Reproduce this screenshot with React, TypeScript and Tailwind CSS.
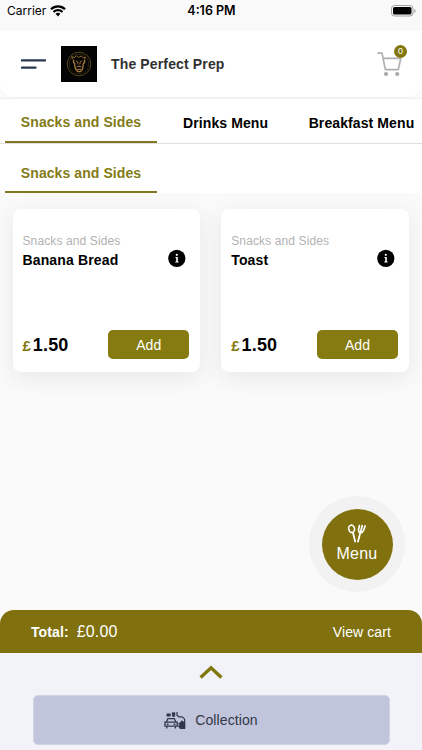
type Product = {
  name: string
  category: string
  price: string
}

const products: Product[] = [
  { name: 'Banana Bread', category: 'Snacks and Sides', price: '1.50' },
  { name: 'Toast', category: 'Snacks and Sides', price: '1.50' },
]

function StatusBar() {
  return (
    <div className="grid h-[31px] shrink-0 grid-cols-3 items-start bg-[#f9f9f9] pl-[7px] pr-[6px] pt-[3px] font-['Inter',sans-serif] text-[12px] leading-4 text-black">
      <div className="flex items-center gap-[4px]">
        <span>Carrier</span>
        <svg width="16" height="12" viewBox="0 0 16 12" fill="none" stroke="black" strokeWidth="2.3">
          <path d="M1 4.3C4.9 .5 11.1 .5 15 4.3" />
          <path d="M3.5 7C6 4.6 10 4.6 12.5 7" />
          <path d="M5.6 8.8C7 7.5 9 7.5 10.4 8.8L8 11.4Z" fill="black" stroke="none" />
        </svg>
      </div>
      <span className="text-center text-[12.5px] font-semibold">4:16 PM</span>
      <svg className="mt-[2px] justify-self-end" width="25" height="12" viewBox="0 0 25 12">
        <rect x=".5" y=".5" width="21.5" height="10.5" rx="3" fill="none" stroke="#a0a0a0" />
        <rect x="2" y="2" width="18.5" height="7.5" rx="1.6" />
        <path d="M23.4 4v4q1.2-.6 1.2-2t-1.2-2Z" fill="#999" />
      </svg>
    </div>
  )
}

function Logo() {
  return (
    <svg className="ml-[15px] shrink-0" width="36" height="36" viewBox="0 0 36 36" fill="none">
      <rect width="36" height="36" fill="#030303" />
      <circle cx="18" cy="18" r="11.8" stroke="#5a481c" strokeWidth="1" />
      <circle cx="18" cy="18" r="9.8" stroke="#3a2e14" strokeWidth=".7" />
      <path d="M11.5 13.2l-.8-2.6 2.6 1.2 2-2.2 2.2 1.8 2.8-1.4 1.6 1.7 2.6-.6-.8 2.2" stroke="#8a6a2c" />
      <path d="M12.6 13.6c-.6 2.2.4 3.6 1.6 4.2M23.4 13.6c.6 2-.2 3.6-1.5 4.2M13.8 17.8c-.4 3.8 1.4 6.6 3.2 7.8h2.4c2-1.6 3.2-4.2 2.6-7.8" stroke="#a97e3c" strokeWidth="1.3" />
      <path d="M14.8 14.8l1.8.8.4 2.8M21.2 14.8l-1.9.8-.4 2.8" stroke="#9c6c38" />
      <path d="M15.6 21.2c1.5-1.4 3.4-1.4 4.8 0M16.2 23c1.2.7 2.6.7 3.8 0" stroke="#b98a55" />
    </svg>
  )
}

function Header() {
  return (
    <header className="flex h-[67px] shrink-0 items-center rounded-b-[14px] border-b border-[#f2f2f2] bg-white pl-[20px] pr-[15px]">
      <svg width="26" height="12" viewBox="0 0 26 12" stroke="#29384f" strokeWidth="2.4" strokeLinecap="round">
        <path d="M2 2.4h23M2 9.6h13.5" />
      </svg>
      <Logo />
      <h1 className="ml-[14px] text-[14px] font-bold leading-5 tracking-[0.14px] text-[#303030]">The Perfect Prep</h1>
      <div className="relative ml-auto h-[34px] w-[31px]">
        <svg className="mt-[4px]" width="27" height="28" viewBox="0 0 27 28" fill="none">
          <path d="M2 2.2h4l3.4 16.4h12.9L24.8 7.3H7.3" stroke="#b0b0b0" strokeWidth="1.7" strokeLinecap="round" strokeLinejoin="round" />
          <circle cx="10" cy="23" r="2.1" fill="#aaa" />
          <circle cx="21.2" cy="23" r="2.1" fill="#aaa" />
        </svg>
        <span className="absolute right-0 top-[-2px] flex size-[13px] items-center justify-center rounded-full bg-[#837710] text-[9px] leading-none text-white">0</span>
      </div>
    </header>
  )
}

function MenuTabs() {
  return (
    <nav className="shrink-0 overflow-hidden whitespace-nowrap bg-white text-[14px] font-bold leading-5">
      <div className="flex h-[46px] items-end border-b border-t border-b-[#e0e0e0] border-t-[#f0f0f0] pl-[5px]">
        <div className="flex h-[44px] w-[152px] shrink-0 justify-center border-b-2 border-[#837723] pt-[13px] tracking-[0.08px] text-[#837b17]">Snacks and Sides</div>
        <div className="h-[44px] shrink-0 pl-[26px] pt-[14px] tracking-[0.1px] text-black">Drinks Menu</div>
        <div className="h-[44px] shrink-0 pl-[40.5px] pt-[14px] tracking-[0.1px] text-black">Breakfast Menu</div>
      </div>
      <div className="flex h-[49px] items-end pl-[5px]">
        <div className="flex h-[49px] w-[152px] justify-center border-b-2 border-[#837723] pt-[19px] tracking-[0.08px] text-[#837b17]">Snacks and Sides</div>
      </div>
    </nav>
  )
}

function ProductCard({ name, category, price }: Product) {
  return (
    <article className="flex h-[163px] flex-col rounded-[8px] bg-white pb-[13px] pl-[10px] pr-[11px] pt-[24px] shadow-[0_5px_22px_rgba(60,70,90,0.10)]">
      <p className="text-[12px] leading-4 tracking-[0.12px] text-[#b2b2b2]">{category}</p>
      <div className="flex items-start justify-between pr-[3px]">
        <h2 className="pt-px text-[14px] font-bold leading-5 tracking-[0.14px] text-black">{name}</h2>
        <svg width="18" height="18" viewBox="0 0 18 18">
          <circle cx="8.8" cy="9.4" r="8.6" />
          <circle cx="8.8" cy="5.8" r="1.1" fill="white" />
          <path d="M7.5 8H9.8v4.4h.8v1H7.3v-1h.9V9h-.7Z" fill="white" />
        </svg>
      </div>
      <div className="mt-auto flex items-center justify-between">
        <p className="flex items-baseline pt-[2px] font-bold">
          <span className="text-[15px] leading-5 text-[#837710]">£</span>
          <span className="ml-[2px] text-[18px] leading-5 tracking-[0.15px] text-black">{price}</span>
        </p>
        <button className="h-[29px] w-[81px] rounded-[5px] bg-[#857b10] text-[14px] leading-5 tracking-[0.1px] text-white">Add</button>
      </div>
    </article>
  )
}

function MenuButton() {
  return (
    <button className="absolute right-[17px] top-[496px] flex size-[96px] items-center justify-center rounded-full bg-[#f2f2f2]">
      <span className="flex size-[71px] flex-col items-center rounded-full bg-[#80710e] pt-[15px] text-white">
        <svg width="20" height="20" viewBox="0 0 20 20" fill="none" stroke="white" strokeLinecap="round">
          <ellipse cx="4.6" cy="4.8" rx="2.9" ry="3.7" transform="rotate(-12 4.6 4.8)" strokeWidth="1.6" />
          <path d="M6 8.8l2.2 8.7" strokeWidth="1.8" />
          <path d="M12.4 1.6l-.8 3.8c-.3 2 .5 3 1.9 3.2 1.5.2 2.5-.7 3-2.1l1.6-4.5M15.2 1.7l-1.4 5.3" strokeWidth="1.7" />
          <path d="M13.3 8.8l-2.3 8.8" strokeWidth="1.8" />
        </svg>
        <span className="text-[16px] leading-[20px] tracking-[0.2px]">Menu</span>
      </span>
    </button>
  )
}

function CollectionIcon() {
  return (
    <svg width="22" height="19" viewBox="0 0 22 19" fill="none" stroke="#30364a">
      <path d="M2.4 11l1.5-3.4h6.4l1.5 3.4M1 11.2h12.2v4H1ZM2.8 15v2.6M11.4 15v2.6" strokeWidth="1.3" />
      <path d="M2.8 13.2h1.8M9.6 13.2h1.8" strokeWidth="1.4" />
      <path d="M2.8 2.8h3.6v2.4H2.8Z" fill="#30364a" strokeWidth=".5" />
      <path d="M8.2 1.8h2.8l-.4 3.6h-2Z" fill="#30364a" strokeWidth=".8" />
      <path d="M13 1v3.2l1.8 1.6h3.4l2.4 2.4v9" strokeWidth="1.2" />
      <path d="M14 12.6l2-1.2 1.8-2.2 3.4 2.6V18h-5.2l-2.4-3.4 2.2-.4Z" fill="#30364a" stroke="none" />
    </svg>
  )
}

function CheckoutPanel() {
  return (
    <footer className="mt-auto h-[140px] shrink-0 rounded-t-[14px] bg-[#f2f3f9]">
      <div className="flex h-[43px] items-center justify-between rounded-t-[14px] bg-[#80710e] pl-[31px] pr-[31px] text-white">
        <div className="flex items-baseline">
          <span className="text-[14px] font-bold leading-5 tracking-[0.1px]">Total:</span>
          <span className="ml-[8px] text-[16px] leading-5 tracking-[0.2px]">£0.00</span>
        </div>
        <span className="text-[14px] leading-5 tracking-[0.1px]">View cart</span>
      </div>
      <div className="flex h-[42px] items-center justify-center pb-[5px]">
        <svg width="24" height="14" viewBox="0 0 24 14" fill="none" stroke="#80770e" strokeWidth="3.4">
          <path d="M1.6 12.4L12 2.8l10.4 9.6" />
        </svg>
      </div>
      <button className="mx-auto flex h-[50px] w-[357px] items-center justify-center gap-[9px] rounded-[5px] border border-[#d1d4e2] bg-[#c0c5dc] text-[14px] leading-5 tracking-[0.1px] text-[#343746]">
        <CollectionIcon />
        <span>Collection</span>
      </button>
    </footer>
  )
}

export default function App() {
  return (
    <div className="relative flex h-[750px] w-[422px] flex-col overflow-hidden bg-[#fafafa] font-['Liberation_Sans',sans-serif]">
      <StatusBar />
      <Header />
      <MenuTabs />
      <main className="grid grid-cols-2 gap-[21px] pl-[12.5px] pr-[13px] pt-[16px]">
        {products.map(product => (
          <ProductCard key={product.name} {...product} />
        ))}
      </main>
      <MenuButton />
      <CheckoutPanel />
    </div>
  )
}
